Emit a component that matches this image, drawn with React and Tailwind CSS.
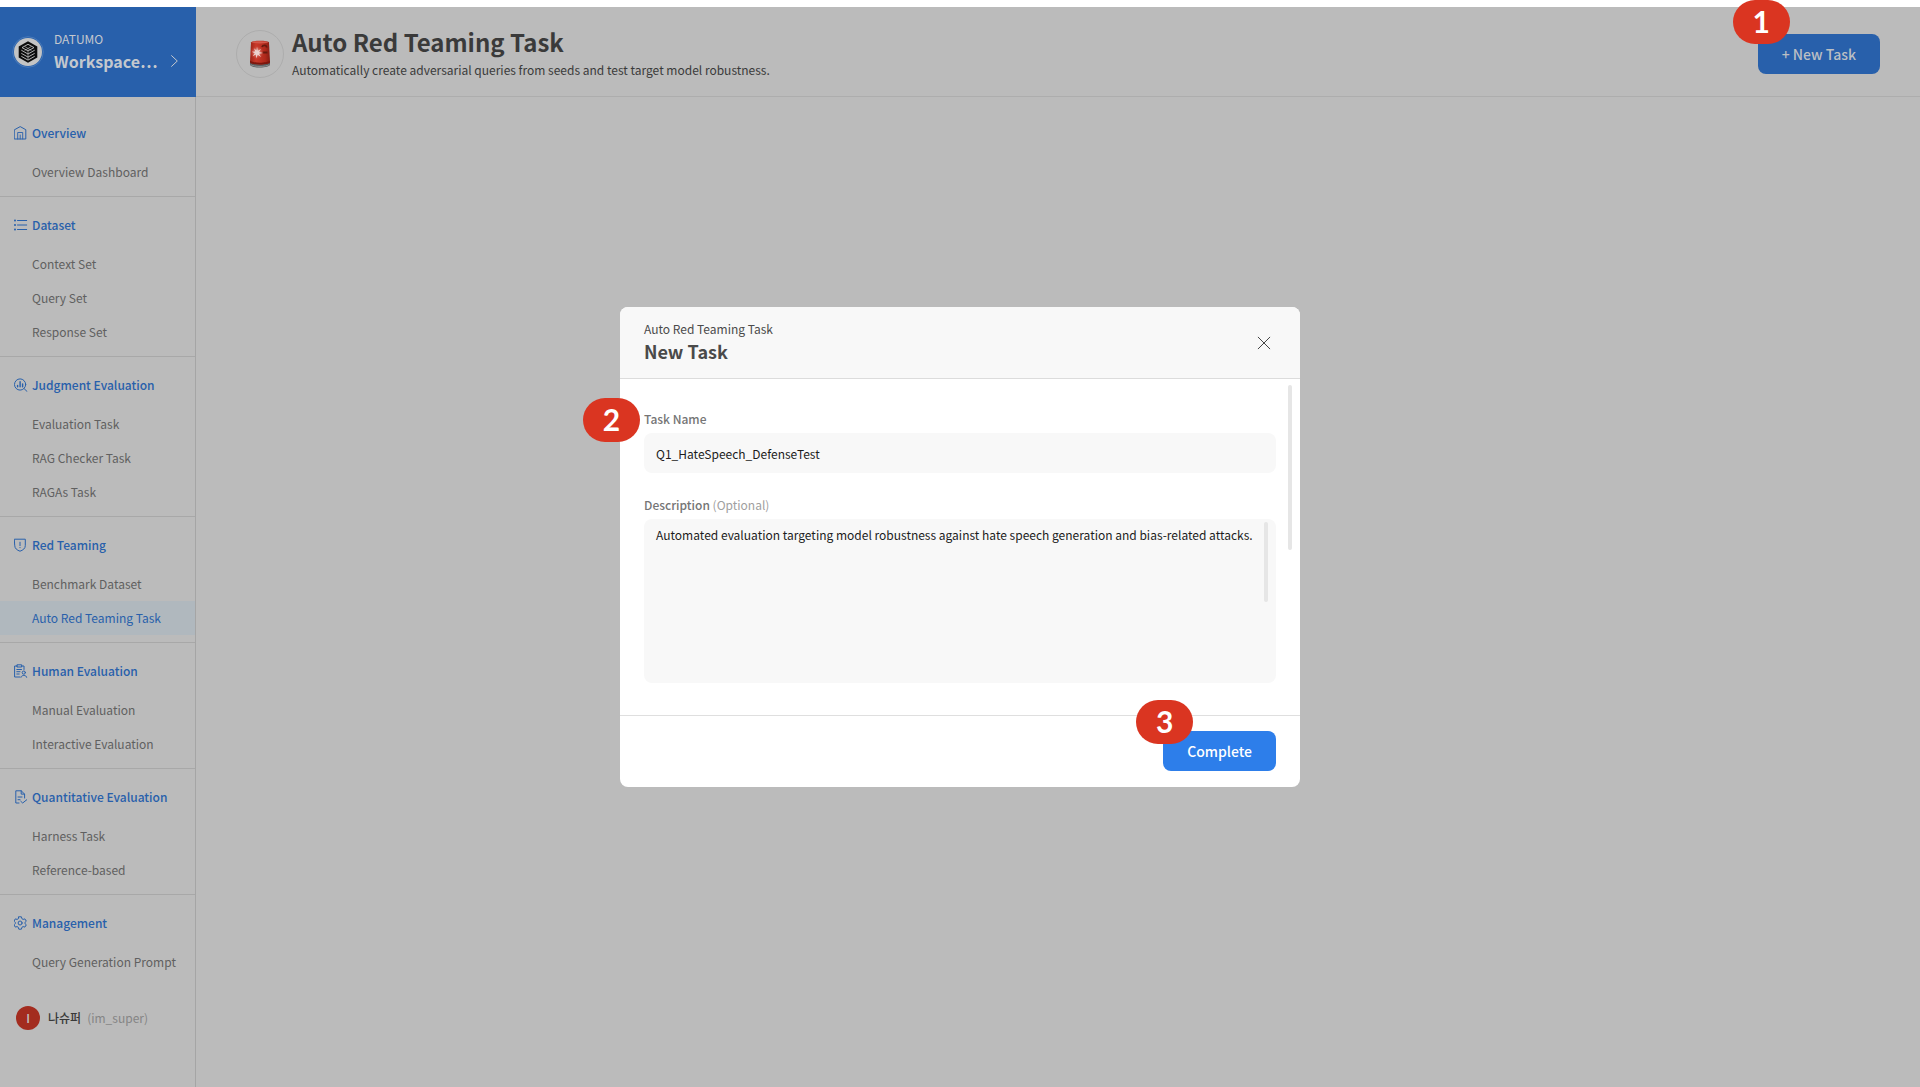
import React from "react";

const iconProps = {
  viewBox: "0 0 14 14",
  fill: "none",
  stroke: "currentColor",
  strokeWidth: 1,
  strokeLinecap: "round",
  strokeLinejoin: "round",
  className: "size-3.5 shrink-0",
  "aria-hidden": true,
};

const HomeIcon = () => (
  <svg {...iconProps}>
    <path d="M0.6 3.7 L6.2 0.6 L11.8 3.7 V13 H0.6 Z" />
    <path d="M3.7 13 V6.5 H8.7 V13 M6.2 9 V13" strokeWidth="0.9" />
  </svg>
);
const ListIcon = () => (
  <svg {...iconProps}>
    <path d="M3.5 2.5 H12.7 M3.5 7 H12.7 M3.5 11.5 H12.7" />
    <path d="M0.9 2.5 H1.1 M0.9 7 H1.1 M0.9 11.5 H1.1" strokeWidth="1.8" />
  </svg>
);
const JudgeIcon = () => (
  <svg {...iconProps}>
    <circle cx="6.1" cy="6.5" r="5.6" />
    <path d="M10.3 10.8 L13 13.4" />
    <path d="M3.6 7.5 V8.8 M6.1 3.8 V8.8 M8.6 6 V8.8" strokeWidth="1.4" />
  </svg>
);
const ShieldIcon = () => (
  <svg {...iconProps}>
    <path d="M0.7 1.2 H11.3 V7.6 C11.3 10.5 9 12.2 6 13.2 C3 12.2 0.7 10.5 0.7 7.6 Z" />
    <path d="M6 4.2 V7.6 M6 9.5 V9.7" />
  </svg>
);
const HumanIcon = () => (
  <svg {...iconProps}>
    <path d="M3.3 2 H0.6 V13 H5.8 M7.7 2 H10 V5.5" />
    <path d="M3.3 0.8 H7.7 V3 H3.3 Z" />
    <path d="M2.8 5.5 H7.5 M2.8 7.7 H6 M2.8 10 H5.2" />
    <circle cx="9.8" cy="8.6" r="1.6" />
    <path d="M6.9 13.3 C6.9 10.7 12.7 10.7 12.7 13.3" />
  </svg>
);
const QuantIcon = () => (
  <svg {...iconProps}>
    <path d="M5 13 H1.8 V0.8 H7.2 L10.6 4.1 V8 M7.2 0.8 V4.1 H10.6" />
    <path d="M4 7 H8 M4 9.7 H6" />
    <path d="M6.8 11.3 L8.7 13 L12.7 9.8" />
  </svg>
);
const GearIcon = () => (
  <svg {...iconProps}>
    <path d="M4.8 0.8 H7.4 L7.9 2.7 L9.1 3.4 L10.9 2.9 L12.3 5.2 L10.9 6.5 V7.5 L12.3 8.8 L10.9 11.1 L9.1 10.6 L7.9 11.3 L7.4 13.2 H4.8 L4.3 11.3 L3.1 10.6 L1.3 11.1 L0 8.8 L1.3 7.5 V6.5 L0 5.2 L1.3 2.9 L3.1 3.4 L4.3 2.7 Z" />
    <circle cx="6.1" cy="7" r="2" />
  </svg>
);

const sections = [
  { title: "Overview", Icon: HomeIcon, items: ["Overview Dashboard"] },
  { title: "Dataset", Icon: ListIcon, items: ["Context Set", "Query Set", "Response Set"] },
  { title: "Judgment Evaluation", Icon: JudgeIcon, items: ["Evaluation Task", "RAG Checker Task", "RAGAs Task"] },
  { title: "Red Teaming", Icon: ShieldIcon, items: ["Benchmark Dataset", "Auto Red Teaming Task"] },
  { title: "Human Evaluation", Icon: HumanIcon, items: ["Manual Evaluation", "Interactive Evaluation"] },
  { title: "Quantitative Evaluation", Icon: QuantIcon, items: ["Harness Task", "Reference-based"] },
  { title: "Management", Icon: GearIcon, items: ["Query Generation Prompt"] },
];
const activeItem = "Auto Red Teaming Task";

const WorkspaceLogo = () => (
  <svg viewBox="0 0 32 32" className="size-8 shrink-0" aria-hidden="true">
    <circle cx="16" cy="16" r="15.3" fill="none" stroke="#4f7fbd" strokeWidth="0.8" />
    <circle cx="16" cy="16" r="14" fill="#c4c4c4" />
    <path d="M16 5.3 L25.3 10.6 V21.4 L16 26.7 L6.7 21.4 V10.6 Z" fill="#0c0c0c" />
    <g fill="none" stroke="#c4c4c4" strokeWidth="0.9">
      <path d="M16 8.3 L22 11.6 L16 14.9 L10 11.6 Z" />
      <path d="M9.3 14.2 L16 18 L22.7 14.2 M9.3 17.3 L16 21.1 L22.7 17.3 M9.3 20.3 L16 24.1 L22.7 20.3" />
      <path d="M12.6 10.5 L19.4 14.5 M19.4 10.5 L12.6 14.5 M16 15 V23.5" strokeWidth="0.6" />
    </g>
  </svg>
);

const SirenIcon = () => (
  <svg viewBox="0 0 22 28" className="h-7 w-[22px]" aria-hidden="true">
    <defs>
      <linearGradient id="lamp" x1="0" x2="1" y1="0" y2="0">
        <stop offset="0" stopColor="#9c2418" />
        <stop offset="0.3" stopColor="#c93a2b" />
        <stop offset="0.75" stopColor="#b02a1c" />
        <stop offset="1" stopColor="#871c12" />
      </linearGradient>
      <radialGradient id="flare">
        <stop offset="0" stopColor="#f3dcd8" />
        <stop offset="0.4" stopColor="#dc8379" stopOpacity="0.8" />
        <stop offset="1" stopColor="#c93a2b" stopOpacity="0" />
      </radialGradient>
    </defs>
    <path d="M1 22 H21 V24.5 C21 28.5 1 28.5 1 24.5 Z" fill="#55585a" />
    <path d="M1.6 24.6 C5 27 17 27 20.4 24.6" stroke="#96999a" strokeWidth="0.9" fill="none" />
    <path d="M2 2.5 C2.2 0.2 19.8 0.2 20 2.5 L21 22 C21 25.3 1 25.3 1 22 Z" fill="url(#lamp)" />
    <path d="M1.2 20.5 C4 23.4 18 23.4 20.8 20.5 L21 22.3 C20 25.2 2 25.2 1 22.3 Z" fill="#7d170e" />
    <ellipse cx="11" cy="2.3" rx="8" ry="1.1" fill="#d4584a" />
    <path d="M13 7 C14 4.5 18 5 17.5 7.5 M13.5 12.5 H18.5" stroke="#66190f" strokeWidth="1.8" fill="none" />
    <circle cx="8" cy="12.5" r="7" fill="url(#flare)" />
    <path d="M8 6.5 L8.8 10.8 L12 9 L10 12 L14 13 L10 13.8 L12 17 L8.7 14.8 L7.2 18.5 L6.9 14.6 L3.5 16.2 L5.8 13.2 L2.8 11.7 L6.3 11.5 L5 8.3 L7.5 10.6 Z" fill="#ecd3cf" />
  </svg>
);

function StepBadge({ n, className }) {
  return (
    <span
      className={`absolute flex h-11 w-[57px] items-center justify-center rounded-[22px] bg-[#da3521] pb-0.5 font-['Lato',sans-serif] text-3xl font-bold text-white ${className}`}
    >
      {n}
    </span>
  );
}

function Sidebar() {
  return (
    <aside className="flex w-[196px] shrink-0 flex-col">
      <button type="button" className="flex h-[90px] items-center bg-[#2860ab] pr-4 pl-3 text-left text-[#c4c8ce]">
        <WorkspaceLogo />
        <span className="ml-2.5 flex min-w-0 flex-1 flex-col pb-0.5">
          <span className="text-xs leading-5">DATUMO</span>
          <span className="flex items-center justify-between">
            <span className="text-base leading-6 font-bold">Workspace…</span>
            <svg viewBox="0 0 12 12" className="size-3" fill="none" stroke="currentColor" aria-hidden="true">
              <path d="M3.3 0.4 L9.3 6 L3.3 11.6" />
            </svg>
          </span>
        </span>
      </button>
      <div className="flex flex-1 flex-col border-r border-[#a5a5a5] pt-2">
        <nav>
          {sections.map(({ title, Icon, items }) => (
            <section key={title} className="border-b border-[#a8a8a8] pt-4 pb-[7px] last:border-b-0">
              <h2 className="mb-2.5 flex h-6 items-center gap-1 pl-3.5 text-xs font-medium text-[#2860ab]">
                <Icon />
                {title}
              </h2>
              <ul>
                {items.map((item) => (
                  <li key={item}>
                    <a
                      href="#"
                      className={`flex h-[34px] items-center pl-8 text-xs ${
                        item === activeItem ? "bg-[#b0b8be] text-[#2860ab]" : "text-[#606060]"
                      }`}
                    >
                      {item}
                    </a>
                  </li>
                ))}
              </ul>
            </section>
          ))}
        </nav>
        <div className="mt-5 flex items-center gap-2 pl-4 text-xs">
          <span className="flex size-6 items-center justify-center rounded-full bg-[#a32c1f] font-medium text-[#c4c4c4]">
            I
          </span>
          <span className="flex gap-1.5 font-medium text-[#383838]">
            나슈퍼 <span className="font-normal text-[#858585]">(im_super)</span>
          </span>
        </div>
      </div>
    </aside>
  );
}

function PageHeader() {
  return (
    <header className="flex h-[90px] items-center border-b border-[#adadad] px-10 pt-[5px]">
      <div className="flex size-12 items-center justify-center rounded-full border border-[#adadad]">
        <SirenIcon />
      </div>
      <div className="ml-2 flex-1 text-[#3a3a3a]">
        <h1 className="text-2xl leading-8 font-bold">Auto Red Teaming Task</h1>
        <p className="text-xs leading-6">
          Automatically create adversarial queries from seeds and test target model robustness.
        </p>
      </div>
      <div className="relative">
        <button type="button" className="block h-10 rounded-lg bg-[#2860ab] px-6 text-sm font-medium text-[#bbbfc4]">
          + New Task
        </button>
        <StepBadge n={1} className="-top-[34px] -left-[25px]" />
      </div>
    </header>
  );
}

function NewTaskModal() {
  return (
    <div role="dialog" aria-labelledby="dialog-title" className="flex w-[680px] flex-col rounded-lg bg-white">
      <header className="flex h-[72px] items-center justify-between rounded-t-lg border-b border-[#dcdcdc] bg-[#f8f8f8] px-6 text-[#4a4a4a]">
        <div className="pb-1">
          <p className="text-xs leading-5">Auto Red Teaming Task</p>
          <h2 id="dialog-title" className="text-lg leading-6 font-bold">
            New Task
          </h2>
        </div>
        <button type="button" aria-label="Close" className="p-1">
          <svg viewBox="0 0 16 16" className="size-4" fill="none" stroke="#444" strokeLinecap="round">
            <path d="M2.2 2.2 L13.8 13.8 M13.8 2.2 L2.2 13.8" />
          </svg>
        </button>
      </header>
      <form className="relative flex flex-col px-6 pt-[30px] pb-8" onSubmit={(e) => e.preventDefault()}>
        <div className="relative flex flex-col gap-1">
          <label htmlFor="task-name" className="text-xs leading-5 font-medium text-[#757575]">
            Task Name
          </label>
          <input
            id="task-name"
            type="text"
            defaultValue="Q1_HateSpeech_DefenseTest"
            className="h-10 rounded-lg bg-[#f8f8f8] px-3 text-xs text-[#1c1c1c] outline-none"
          />
          <StepBadge n={2} className="-top-[11px] -left-[61px]" />
        </div>
        <div className="relative mt-[22px] flex flex-col gap-1">
          <label htmlFor="description" className="text-xs leading-5 font-medium text-[#757575]">
            Description <span className="font-normal text-[#a0a0a0]">(Optional)</span>
          </label>
          <textarea
            id="description"
            defaultValue="Automated evaluation targeting model robustness against hate speech generation and bias-related attacks."
            className="h-[164px] resize-none overflow-hidden rounded-lg bg-[#f8f8f8] px-3 py-1.5 text-xs leading-5 text-[#1c1c1c] outline-none"
          />
          <span className="absolute top-[27px] right-2 h-20 w-1 rounded-full bg-[#e6e6e6]" />
        </div>
        <span className="absolute top-1.5 right-2 h-[165px] w-1 rounded-full bg-[#e6e6e6]" />
      </form>
      <footer className="flex h-[72px] items-start justify-end border-t border-[#dfdfdf] pt-[15px] pr-6">
        <div className="relative">
          <button type="button" className="block h-10 rounded-lg bg-[#2d7eea] px-6 text-sm font-medium text-white">
            Complete
          </button>
          <StepBadge n={3} className="-top-[31px] -left-[27px]" />
        </div>
      </footer>
    </div>
  );
}

export default function App() {
  return (
    <div className="flex min-h-screen flex-col bg-white pt-[7px] font-['Noto_Sans_CJK_KR',sans-serif]">
      <div className="relative flex flex-1 bg-[#bbbbbb]">
        <Sidebar />
        <main className="min-w-0 flex-1">
          <PageHeader />
        </main>
        <div className="pointer-events-none absolute inset-0 flex items-center justify-center">
          <div className="pointer-events-auto">
            <NewTaskModal />
          </div>
        </div>
      </div>
    </div>
  );
}
